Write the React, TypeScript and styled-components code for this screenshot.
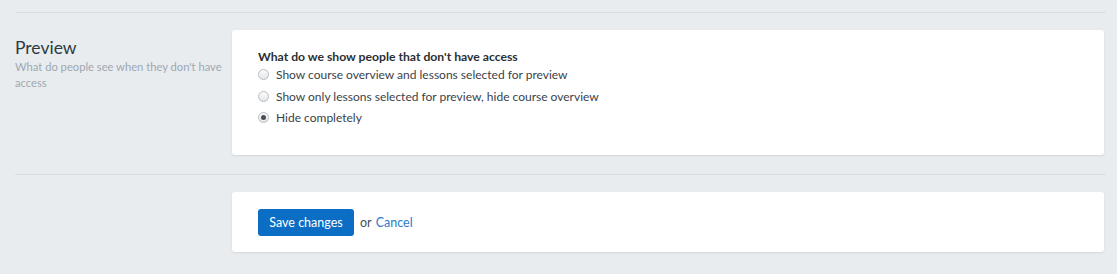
import styled, { createGlobalStyle } from "styled-components";

const GlobalStyle = createGlobalStyle`
  html, body {
    margin: 0;
    padding: 0;
    background: #e9ecef;
  }
  body {
    font-family: Lato, "Liberation Sans", Arial, sans-serif;
    color: #333d45;
  }
`;

const Page = styled.div`
  padding: 12px 11px 0 15px;
`;

const Section = styled.section`
  display: flex;
  border-top: 1px solid #d6dde3;
  padding: 17px 0 19px;
`;

const SectionInfo = styled.div`
  width: 217px;
  flex-shrink: 0;
  padding: 8px 0 0 0;
  box-sizing: border-box;
`;

const SectionTitle = styled.h2`
  margin: 0;
  font-size: 17.5px;
  font-weight: 400;
  line-height: 20px;
  color: #2c3a44;
`;

const SectionHint = styled.p`
  margin: 1px 0 0;
  font-size: 11.2px;
  line-height: 15.5px;
  color: #9da8b1;
`;

const Card = styled.div<{ compact?: boolean }>`
  flex: 1;
  margin-right: 2px;
  background: #fff;
  border-radius: 3px;
  box-shadow: 0 1px 2px rgba(40, 55, 70, 0.12);
  padding: ${(p) => (p.compact ? "17px 26px 16px" : "19px 26px 26.5px")};
`;

const FieldLabel = styled.div`
  font-size: 12.2px;
  font-weight: 700;
  line-height: 15px;
  color: #2a2f33;
`;

const RadioRow = styled.label`
  display: flex;
  align-items: center;
  height: 21.5px;
  font-size: 12px;
  color: #3a4249;
  cursor: pointer;
`;

const RadioDot = styled.span<{ checked?: boolean }>`
  position: relative;
  width: 9px;
  height: 9px;
  margin: 0 7px 0 0;
  border-radius: 50%;
  border: 1px solid #b9bec3;
  background: linear-gradient(#fbfbfb, #e4e6e8);
  flex-shrink: 0;

  &::after {
    content: "";
    display: ${(p) => (p.checked ? "block" : "none")};
    position: absolute;
    left: 2px;
    top: 2px;
    width: 5px;
    height: 5px;
    border-radius: 50%;
    background: #4a4f55;
  }
`;

const Actions = styled.div`
  display: flex;
  align-items: center;
  font-size: 12.5px;
  color: #444c53;
`;

const PrimaryButton = styled.button`
  height: 27px;
  width: 96px;
  padding: 0;
  margin-right: 6px;
  border: none;
  border-radius: 3px;
  background: #0b6ec4;
  color: #fff;
  font-family: inherit;
  font-size: 12.5px;
  cursor: pointer;
`;

const CancelLink = styled.a`
  margin-left: 4px;
  color: #2b7bc8;
  text-decoration: none;
`;

const options = [
  "Show course overview and lessons selected for preview",
  "Show only lessons selected for preview, hide course overview",
  "Hide completely",
];

export default function App() {
  return (
    <Page>
      <GlobalStyle />
      <Section>
        <SectionInfo>
          <SectionTitle>Preview</SectionTitle>
          <SectionHint>What do people see when they don't have access</SectionHint>
        </SectionInfo>
        <Card>
          <FieldLabel>What do we show people that don't have access</FieldLabel>
          {options.map((text, i) => (
            <RadioRow key={text}>
              <RadioDot checked={i === 2} />
              {text}
            </RadioRow>
          ))}
        </Card>
      </Section>
      <Section>
        <SectionInfo />
        <Card compact>
          <Actions>
            <PrimaryButton>Save changes</PrimaryButton>
            or
            <CancelLink href="#">Cancel</CancelLink>
          </Actions>
        </Card>
      </Section>
    </Page>
  );
}
